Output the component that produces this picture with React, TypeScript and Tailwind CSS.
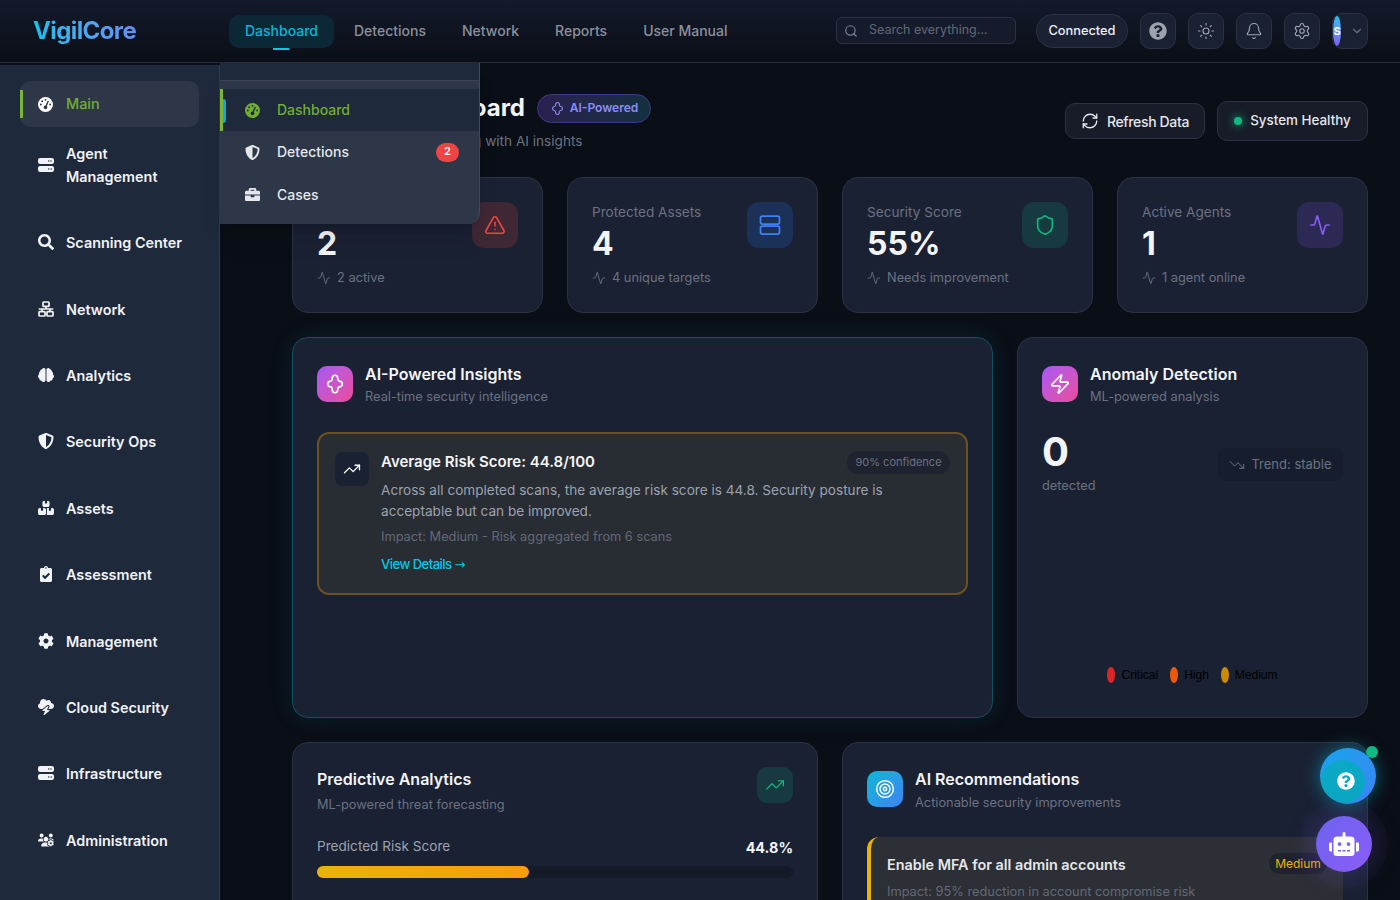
import type { ReactNode } from 'react'
import {
  Search, Sun, Bell, Settings, ChevronDown, RefreshCw, TriangleAlert, Shield, Activity,
  TrendingUp, TrendingDown, Zap, Target,
} from 'lucide-react'
import { FaSearch, FaBrain, FaShieldAlt, FaClipboardCheck, FaCog, FaBriefcase, FaQuestionCircle, FaRobot, FaChartBar } from 'react-icons/fa'
import { FaCloudBolt, FaGaugeHigh, FaServer, FaBoxesStacked, FaUsersGear } from 'react-icons/fa6'

function NetworkIcon({ className }: { className?: string }) {
  return (
    <svg viewBox="0 0 24 24" className={className} fill="none" stroke="currentColor" strokeWidth="2.6">
      <rect x="7.5" y="1.5" width="9" height="6.5" rx="1" />
      <rect x="1.5" y="16" width="9" height="6.5" rx="1" />
      <rect x="13.5" y="16" width="9" height="6.5" rx="1" />
      <path d="M12 8v4M1 12h22M6 12v4M18 12v4" />
    </svg>
  )
}

const sidebarItems = [
  { label: 'Agent Management', icon: FaServer, h: 'h-[70px] mb-[19px]', wrap: 'max-w-[110px]' },
  { label: 'Scanning Center', icon: FaSearch, h: 'h-[46px] mb-[21px]', wrap: '' },
  { label: 'Network', icon: NetworkIcon, h: 'h-[46px] mb-[20px]', wrap: '' },
  { label: 'Analytics', icon: FaBrain, h: 'h-[46px] mb-[20px]', wrap: '' },
  { label: 'Security Ops', icon: FaShieldAlt, h: 'h-[46px] mb-[21px]', wrap: '' },
  { label: 'Assets', icon: FaBoxesStacked, h: 'h-[46px] mb-[20px]', wrap: '' },
  { label: 'Assessment', icon: FaClipboardCheck, h: 'h-[46px] mb-[21px]', wrap: '' },
  { label: 'Management', icon: FaCog, h: 'h-[46px] mb-[20px]', wrap: '' },
  { label: 'Cloud Security', icon: FaCloudBolt, h: 'h-[46px] mb-[20px]', wrap: '' },
  { label: 'Infrastructure', icon: FaServer, h: 'h-[46px] mb-[21px]', wrap: '' },
  { label: 'Administration', icon: FaUsersGear, h: 'h-[46px] mb-[20px]', wrap: '' },
  { label: 'Reports', icon: FaChartBar, h: 'h-[46px] mb-[20px]', wrap: '' },
]

// rounded four-lobe mark used on the AI badge and panel
function AiMark({ className }: { className: string }) {
  return (
    <svg viewBox="0 0 24 24" className={className} fill="none" stroke="currentColor" strokeWidth="1.75" strokeLinejoin="round">
      <path d="M12 2.5c2 0 3 1.7 3 3.6 0 1.5.6 2.6 2 2.8 1.7.2 3 1.3 3 3.1s-1.3 2.9-3 3.1c-1.4.2-2 1.3-2 2.8 0 1.9-1 3.6-3 3.6s-3-1.7-3-3.6c0-1.5-.6-2.6-2-2.8-1.7-.2-3-1.3-3-3.1s1.3-2.9 3-3.1c1.4-.2 2-1.3 2-2.8 0-1.9 1-3.6 3-3.6z" />
    </svg>
  )
}

function IconButton({ children }: { children: ReactNode }) {
  return (
    <button className="w-9 h-[36px] rounded-[10px] bg-[#1a2133] border border-[#2b3244] flex items-center justify-center text-[#a0a6b4]">
      {children}
    </button>
  )
}

function StatCard({ label, value, note, iconBg, icon }: { label: string; value: string; note: string; iconBg: string; icon: ReactNode }) {
  return (
    <div className="flex-1 h-[136px] rounded-2xl bg-[#1a2133] border border-[#2b3244] px-6 pt-[24px] relative">
      <p className="text-[13.6px] leading-5 text-[#6b7280]">{label}</p>
      <p className="text-[32px] leading-[40px] mt-[2px] font-bold text-[#f3f4f6]">{value}</p>
      <p className="flex items-center gap-[6px] text-[12.8px] leading-5 mt-[4px] text-[#6b7280]">
        <Activity className="w-[14px] h-[14px] shrink-0" strokeWidth={1.5} />
        {note}
      </p>
      <div className={`absolute top-6 right-6 w-[46px] h-[46px] rounded-xl flex items-center justify-center ${iconBg}`}>{icon}</div>
    </div>
  )
}

export default function App() {
  return (
    <div className="h-[900px] w-[1400px] overflow-hidden bg-[#0a0e16] font-['Inter',sans-serif] flex flex-col relative">
      {/* Top bar */}
      <header className="h-[63px] shrink-0 flex items-center bg-gradient-to-b from-[#131a2b] to-[#0a0e16] border-b border-[#262c3a] pl-[33px] pr-[32px]">
        <span className="w-[196px] text-[24px] font-bold tracking-[-0.6px] bg-gradient-to-r from-[#0ebfee] to-[#7c5cf0] bg-clip-text text-transparent">VigilCore</span>
        <nav className="flex items-center gap-1 text-sm font-medium text-[#8b909c]">
          <div className="relative px-4 h-[33px] flex items-center rounded-[10px] bg-[#0c2836] text-[#06b6d4]">
            Dashboard
            <span className="absolute left-[44px] -bottom-[2px] w-4 h-0.5 bg-[#06c8ee]" />
          </div>
          <span className="px-4">Detections</span>
          <span className="px-4">Network</span>
          <span className="px-4">Reports</span>
          <span className="px-4">User Manual</span>
        </nav>
        <div className="ml-auto flex items-center">
          <div className="w-[180px] h-[27px] -mt-[1px] rounded-md bg-[#151b2a] border border-[#2b3244] flex items-center pl-[7px] gap-[11px] text-[12.5px] text-[#626875]">
            <Search className="w-[14px] h-[14px] text-[#7d8390]" />
            Search everything...
          </div>
          <div className="ml-5 h-[34px] w-[92px] rounded-full bg-[#1a2133] border border-[#2b3244] flex items-center justify-center text-[12.8px] font-medium text-[#eceef2]">Connected</div>
          <div className="ml-3 flex gap-3 items-center">
            <IconButton><FaQuestionCircle className="w-[18px] h-[18px] text-[#9ca3af]" /></IconButton>
            <IconButton><Sun className="w-[18px] h-[18px]" strokeWidth={1.5} /></IconButton>
            <IconButton><Bell className="w-[18px] h-[18px]" strokeWidth={1.5} /></IconButton>
            <IconButton><Settings className="w-[18px] h-[18px]" strokeWidth={1.5} /></IconButton>
            <button className="w-9 h-[36px] rounded-[10px] bg-[#1a2133] border border-[#2b3244] flex items-center relative">
              <span className="w-2 h-[30px] rounded-[50%] bg-gradient-to-b from-[#0ebfee] to-[#7c5cf0] flex items-center justify-center text-[11px] font-bold text-white">S</span>
              <ChevronDown className="absolute right-[3px] w-3.5 h-3.5 text-[#6b7280]" />
            </button>
          </div>
        </div>
      </header>

      <div className="flex flex-1 min-h-0">
        {/* Sidebar */}
        <aside className="w-[220px] shrink-0 mt-[2px] bg-[#1e293b] border-r border-[#333b4b] pt-[16px] pl-[20px] pr-[20px] overflow-hidden">
          <div className="relative h-[46px] mb-[3px] rounded-[10px] bg-[#2d3748] flex items-center pl-[18px] gap-[13px] text-[14.4px] font-medium text-[#72ae31]">
            <span className="absolute left-0 top-[9px] w-[3px] h-[28px] bg-[#7cb532]" />
            <FaGaugeHigh className="w-[15px] h-[15px] text-white" />
            Main
          </div>
          {sidebarItems.map(({ label, icon: Icon, h, wrap }) => (
            <div key={label} className={`flex items-center pl-[18px] gap-[13px] text-[14.4px] font-semibold leading-[23px] text-[#f1f3f6] ${h}`}>
              <span className="w-[15px] flex justify-center shrink-0">
                <Icon className="w-[16px] h-[16px] shrink-0" />
              </span>
              <span className={wrap}>{label}</span>
            </div>
          ))}
        </aside>

        {/* Main */}
        <main className="flex-1 min-w-0 pl-[72px] pr-[32px] pt-[31px]">
          <div className="flex items-start justify-between h-[83px]">
            <div className="w-full">
              <div className="flex items-center justify-end w-[359px] gap-3 h-[28px]">
                <h1 className="text-2xl font-bold text-[#f3f4f6] whitespace-nowrap">Security Dashboard</h1>
                <span className="h-[29px] w-[114px] shrink-0 rounded-full bg-gradient-to-r from-[#2a2050] to-[#13303f] border border-[#3e3a8a] flex items-center justify-center gap-[5px] text-xs font-semibold text-[#8c8cf8]">
                  <AiMark className="w-[15px] h-[15px]" />
                  AI-Powered
                </span>
              </div>
              <p className="text-[13.6px] text-[#6b7280] mt-[9px] ml-[14px] whitespace-nowrap">Real-time threat monitoring with AI insights</p>
            </div>
            <div className="flex items-center gap-3 shrink-0 pt-[7px]">
              <button className="h-9 w-[140px] rounded-[10px] bg-[#171c28] border border-[#2b3244] flex items-center justify-center gap-[8px] text-[14px] tracking-[-0.35px] font-medium text-[#e5e7eb]">
                <RefreshCw className="w-[18px] h-[18px]" strokeWidth={1.75} />
                Refresh Data
              </button>
              <div className="h-[40px] w-[151px] pb-[1px] rounded-[10px] bg-[#171c28] border border-[#2b3244] flex items-center justify-center gap-2 text-[13.4px] font-medium text-[#e5e7eb]">
                <span className="w-2 h-2 rounded-full bg-[#10b981] shadow-[0_0_8px_#10b981]" />
                System Healthy
              </div>
            </div>
          </div>

          {/* Stat cards */}
          <div className="flex gap-6">
            <StatCard label="Total Scans" value="2" note="2 active" iconBg="bg-[#3f2733]" icon={<TriangleAlert className="w-[22px] h-[22px] text-[#ef4444]" strokeWidth={1.75} />} />
            <StatCard
              label="Protected Assets"
              value="4"
              note="4 unique targets"
              iconBg="bg-[#1c3158]"
              icon={
                <svg viewBox="0 0 24 24" className="w-[24px] h-[24px] text-[#3b82f6]" fill="none" stroke="currentColor" strokeWidth="1.75">
                  <rect x="2.5" y="3" width="19" height="8" rx="2" />
                  <rect x="2.5" y="13" width="19" height="8" rx="2" />
                </svg>
              }
            />
            <StatCard label="Security Score" value="55%" note="Needs improvement" iconBg="bg-[#173a40]" icon={<Shield className="w-[22px] h-[22px] text-[#10b981]" strokeWidth={1.75} />} />
            <StatCard label="Active Agents" value="1" note="1 agent online" iconBg="bg-[#2c2a55]" icon={<Activity className="w-[22px] h-[22px] text-[#8b5cf6]" strokeWidth={1.75} />} />
          </div>

          {/* Insights row */}
          <div className="flex gap-6 mt-6">
            <section className="w-[701px] h-[381px] rounded-2xl bg-[#1a2133] border border-[#14505f] shadow-[0_0_24px_rgba(6,182,212,0.12)] px-6 pt-[27px]">
              <div className="flex gap-3">
                <div className="w-9 h-9 mt-[1px] rounded-[10px] bg-gradient-to-br from-[#a855f7] to-[#ec4899] flex items-center justify-center">
                  <AiMark className="w-[22px] h-[22px] text-white" />
                </div>
                <div>
                  <h2 className="text-base leading-[18px] font-semibold text-[#f3f4f6]">AI-Powered Insights</h2>
                  <p className="text-[12.8px] leading-5 mt-[4px] text-[#6b7280]">Real-time security intelligence</p>
                </div>
              </div>
              <div className="mt-[25px] h-[163px] rounded-xl bg-[#282c33] border-2 border-[#6b5020] pl-4 pr-4 pt-4 flex gap-[12px] relative">
                <div className="w-[34px] h-[34px] mt-[2px] rounded-lg bg-[#1a2133] flex items-center justify-center shrink-0">
                  <TrendingUp className="w-[18px] h-[18px] text-white" strokeWidth={1.75} />
                </div>
                <div>
                  <h3 className="text-[15px] leading-5 mt-[2px] font-semibold text-[#f3f4f6]">Average Risk Score: 44.8/100</h3>
                  <p className="text-[13.6px] leading-[21px] mt-[8px] text-[#9ca3af]">Across all completed scans, the average risk score is 44.8. Security posture is<br />acceptable but can be improved.</p>
                  <p className="text-[12.8px] leading-5 mt-[5px] text-[#636976]">Impact: Medium - Risk aggregated from 6 scans</p>
                  <p className="text-[13px] leading-5 mt-[7px] tracking-[-0.5px] font-medium text-[#06c8ee]">View Details <span className="font-['DejaVu_Sans',sans-serif] font-normal tracking-normal">→</span></p>
                </div>
                <span className="absolute right-4 top-[17px] h-[23px] w-[103px] rounded-full bg-[#1f2330] flex items-center justify-center text-[11px] text-[#6b7280]">90% confidence</span>
              </div>
            </section>

            <section className="flex-1 h-[381px] rounded-2xl bg-[#1a2133] border border-[#2b3244] px-6 pt-[27px] flex flex-col">
              <div className="flex gap-3">
                <div className="w-9 h-9 mt-[1px] rounded-[10px] bg-gradient-to-br from-[#a855f7] to-[#ec4899] flex items-center justify-center">
                  <Zap className="w-[22px] h-[22px] text-white" strokeWidth={1.75} />
                </div>
                <div>
                  <h2 className="text-base leading-[18px] font-semibold text-[#f3f4f6]">Anomaly Detection</h2>
                  <p className="text-[12.8px] leading-5 mt-[4px] text-[#6b7280]">ML-powered analysis</p>
                </div>
              </div>
              <div className="flex justify-between items-start mt-[23px]">
                <div>
                  <p className="text-[40px] leading-[44px] font-bold text-[#f3f4f6]">0</p>
                  <p className="text-[12.8px] leading-5 mt-[2px] text-[#6b7280]">detected</p>
                </div>
                <div className="mt-[18px] h-[33px] w-[125px] rounded-lg bg-[#161e2e] flex items-center justify-center gap-[6px] text-[13px] text-[#6b7280]">
                  <TrendingDown className="w-4 h-4 shrink-0" strokeWidth={1.5} />
                  Trend: stable
                </div>
              </div>
              <div className="mt-auto mb-[34px] flex justify-center gap-[12px] text-xs font-['Liberation_Sans',sans-serif] text-black">
                <span className="flex items-center gap-[6px]"><i className="w-2 h-4 rounded-[50%] bg-[#dc2626]" />Critical</span>
                <span className="flex items-center gap-[6px]"><i className="w-2 h-4 rounded-[50%] bg-[#ea580c]" />High</span>
                <span className="flex items-center gap-[6px]"><i className="w-2 h-4 rounded-[50%] bg-[#ca8a04]" />Medium</span>
              </div>
            </section>
          </div>

          {/* Bottom row */}
          <div className="flex gap-6 mt-6">
            <section className="w-[526px] h-[300px] rounded-2xl bg-[#1a2133] border border-[#2b3244] px-6 pt-[26px] relative">
              <h2 className="text-base leading-5 font-semibold text-[#f3f4f6]">Predictive Analytics</h2>
              <p className="text-[12.8px] leading-5 mt-[6px] text-[#6b7280]">ML-powered threat forecasting</p>
              <div className="absolute top-6 right-6 w-9 h-9 rounded-[10px] bg-[#173a40] flex items-center justify-center">
                <TrendingUp className="w-5 h-5 text-[#10b981]" strokeWidth={1.5} />
              </div>
              <div className="flex justify-between items-center mt-[19px]">
                <span className="text-[#9ca3af] text-[13.6px]">Predicted Risk Score</span>
                <span className="font-bold text-[#f3f4f6] text-[14.4px] mt-[3px]">44.8%</span>
              </div>
              <div className="mt-[7px] h-3 rounded-full bg-[#141a28]">
                <div className="h-3 w-[212px] rounded-full bg-gradient-to-r from-[#eab308] to-[#f59e0b]" />
              </div>
            </section>
            <section className="flex-1 h-[300px] rounded-2xl bg-[#1a2133] border border-[#2b3244] px-6 pt-[27px]">
              <div className="flex gap-3">
                <div className="w-9 h-9 mt-[1px] rounded-[10px] bg-gradient-to-br from-[#06b6d4] to-[#3b82f6] flex items-center justify-center">
                  <Target className="w-5 h-5 text-white" strokeWidth={1.75} />
                </div>
                <div>
                  <h2 className="text-base leading-[18px] font-semibold text-[#f3f4f6]">AI Recommendations</h2>
                  <p className="text-[12.8px] leading-5 mt-[5px] text-[#6b7280]">Actionable security improvements</p>
                </div>
              </div>
              <div className="mt-[24px] rounded-xl bg-[#2c2f35] border-l-4 border-[#eab308] pl-4 pr-6 pt-[18px] h-[120px] relative">
                <h3 className="text-[14.4px] leading-5 font-semibold text-[#e5e7eb]">Enable MFA for all admin accounts</h3>
                <p className="text-[12.8px] leading-5 mt-[7px] text-[#636976]">Impact: 95% reduction in account compromise risk</p>
                <span className="absolute right-4 top-[16px] h-[21px] w-[58px] rounded-full bg-[#1f2330] flex items-center justify-center text-xs text-[#eab308]">Medium</span>
              </div>
            </section>
          </div>
        </main>
      </div>

      {/* Dropdown over sidebar */}
      <div className="absolute left-[220px] top-[63px] w-[260px] h-[161px] rounded-br-xl bg-[#2d3748] border-r border-[#414a5c] shadow-xl">
        <div className="h-[18px] bg-[#1e293b] border-b border-[#3b4456]" />
        <div className="h-[42px] mt-[8px] bg-[#1e293b] border-l-[3px] border-[#7cb532] flex items-center pl-[22px] gap-[17px] text-sm font-medium text-[#72ae31] relative">
          <span className="absolute left-0 top-[10px] w-[3px] h-[24px] bg-[#0ea5e9] rounded-r" />
          <FaGaugeHigh className="w-[15px] h-[15px]" />
          Dashboard
        </div>
        <div className="h-[42px] flex items-center pl-[25px] gap-[17px] text-sm font-medium text-[#e5e7eb]">
          <FaShieldAlt className="w-[15px] h-[15px]" />
          Detections
          <span className="ml-auto mr-[20px] w-[23px] h-[19px] rounded-full bg-[#ef4444] flex items-center justify-center text-[11px] font-semibold text-white">2</span>
        </div>
        <div className="h-[43px] flex items-center pl-[25px] gap-[17px] text-sm font-medium text-[#e5e7eb]">
          <FaBriefcase className="w-[15px] h-[15px]" />
          Cases
        </div>
      </div>

      {/* Floating buttons */}
      <div className="absolute left-[1320px] top-[748px] w-[56px] h-[56px] rounded-full bg-gradient-to-br from-[#0ea5e9] to-[#3b82f6] shadow-[0_0_18px_rgba(6,182,212,0.55)] overflow-hidden flex items-center justify-center">
        <span className="absolute left-[1px] top-[12px] w-[44px] h-[44px] rounded-full bg-[#0aa8c4]" />
        <FaQuestionCircle className="relative w-[18px] h-[18px] text-white -ml-[5px] mt-[10px]" />
      </div>
      <span className="absolute left-[1366px] top-[746px] w-3 h-3 rounded-full bg-[#10b981]" />
      <div className="absolute left-[1316px] top-[816px] w-[56px] h-[56px] rounded-full bg-gradient-to-br from-[#6d63f0] to-[#8b5cf6] shadow-[0_0_0_16px_rgba(124,92,240,0.04),0_0_30px_rgba(124,92,240,0.25)] flex items-center justify-center">
        <FaRobot className="w-[30px] h-[24px] text-white" />
      </div>
    </div>
  )
}
